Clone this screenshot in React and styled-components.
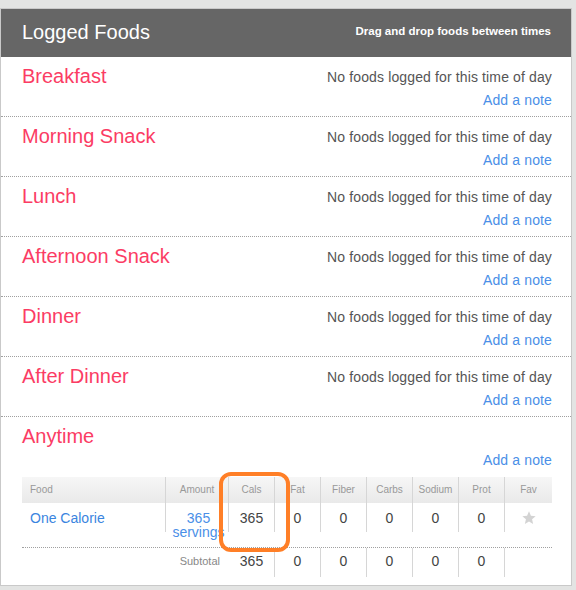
import React from 'react';
import styled, { createGlobalStyle } from 'styled-components';

const GlobalStyle = createGlobalStyle`
  html, body {
    margin: 0;
    padding: 0;
    background: #e3e4e3;
  }
  body {
    padding-top: 8px;
    font-family: "Liberation Sans", Arial, sans-serif;
  }
`;

const Card = styled.div`
  position: relative;
  width: 570px;
  background: #fff;
  border: 1px solid #c9c9c9;
  padding-bottom: 8px;
`;

const Header = styled.div`
  height: 48px;
  background: #666;
  display: flex;
  align-items: center;
  justify-content: space-between;
  padding: 0 20px 0 21px;
  color: #fff;
`;

const HeaderTitle = styled.div`
  font-size: 20px;
  margin-top: -2px;
`;

const HeaderHint = styled.div`
  font-size: 11.5px;
  font-weight: bold;
  margin-top: -4px;
`;

const Section = styled.div`
  border-bottom: ${({ last }) => (last ? 'none' : '1px dotted #a0a0a0')};
  padding: 0 19px 0 21px;
`;

const SectionHead = styled.div`
  height: 59px;
  display: flex;
  justify-content: space-between;
  box-sizing: border-box;
  padding-top: 7px;
`;

const MealName = styled.div`
  font-size: 20px;
  line-height: 24px;
  color: #fb3c64;
`;

const Notes = styled.div`
  text-align: right;
  font-size: 14px;
  line-height: 23px;
  padding-top: 2px;
  letter-spacing: 0.13px;
  color: #555;
`;

const NoteLink = styled.a`
  display: block;
  color: #4a8fe7;
  text-decoration: none;
  cursor: pointer;
`;

const Empty = styled.div`
  height: 23px;
`;

const Table = styled.div`
  margin-top: 1px;
  width: 530px;
`;

const cols = '144px 63px 46px 46px 46px 46px 46px 46px 47px';

const HeadRow = styled.div`
  display: grid;
  grid-template-columns: ${cols};
  height: 26px;
  background: linear-gradient(#f6f6f6, #e9e9e9);
`;

const HeadCell = styled.div`
  font-size: 10px;
  line-height: 26px;
  color: #999;
  text-align: ${({ align }) => align || 'center'};
  padding-left: ${({ align }) => (align === 'left' ? '8px' : '0')};
  border-right: ${({ edge }) => (edge ? 'none' : '1px solid #d6d6d6')};
  white-space: nowrap;
  overflow: hidden;
`;

const BodyRow = styled.div`
  display: grid;
  grid-template-columns: ${cols};
  padding-bottom: 15px;
  border-bottom: 1px dotted #a0a0a0;
`;

const Cell = styled.div`
  height: 29px;
  box-sizing: border-box;
  padding-top: 8px;
  font-size: 14px;
  line-height: 14px;
  color: #444;
  text-align: ${({ align }) => align || 'center'};
  padding-left: ${({ align }) => (align === 'left' ? '8px' : '0')};
  border-right: ${({ edge }) => (edge ? 'none' : '1px solid #d6d6d6')};
`;

const FoodLink = styled.a`
  color: #3a85e0;
  text-decoration: none;
`;

const AmountLink = styled.a`
  color: #4a8fe7;
  text-decoration: none;
  display: block;
  padding-left: 3px;
`;

const SubRow = styled.div`
  display: grid;
  grid-template-columns: 207px 46px 46px 46px 46px 46px 46px 47px;
`;

const SubCell = styled.div`
  height: 29px;
  line-height: 27px;
  font-size: 14px;
  color: #444;
  text-align: center;
  border-right: ${({ edge }) => (edge ? 'none' : '1px solid #d6d6d6')};
`;

const SubLabel = styled.div`
  font-size: 11px;
  line-height: 27px;
  color: #888;
  text-align: right;
  padding-right: 9px;
`;

const Highlight = styled.div`
  position: absolute;
  left: 218px;
  top: 463px;
  width: 63px;
  height: 72px;
  border: 4px solid #ff7f27;
  border-radius: 12px;
  pointer-events: none;
`;

const StarIcon = () => (
  <svg width="16" height="16" viewBox="0 0 24 24" style={{ marginTop: -1 }}>
    <polygon
      points="12,2 14.9,8.6 22,9.3 16.6,14 18.2,21 12,17.3 5.8,21 7.4,14 2,9.3 9.1,8.6"
      fill="#d3d3d3"
    />
  </svg>
);

const meals = ['Breakfast', 'Morning Snack', 'Lunch', 'Afternoon Snack', 'Dinner', 'After Dinner'];
const heads = ['Fat', 'Fiber', 'Carbs', 'Sodium', 'Prot'];

const App = () => (
  <>
    <GlobalStyle />
    <Card>
      <Header>
        <HeaderTitle>Logged Foods</HeaderTitle>
        <HeaderHint>Drag and drop foods between times</HeaderHint>
      </Header>
      {meals.map((meal) => (
        <Section key={meal}>
          <SectionHead>
            <MealName>{meal}</MealName>
            <Notes>
              No foods logged for this time of day
              <NoteLink>Add a note</NoteLink>
            </Notes>
          </SectionHead>
        </Section>
      ))}
      <Section last>
        <SectionHead>
          <MealName>Anytime</MealName>
          <Notes>
            <Empty />
            <NoteLink>Add a note</NoteLink>
          </Notes>
        </SectionHead>
        <Table>
          <HeadRow>
            <HeadCell align="left">Food</HeadCell>
            <HeadCell>Amount</HeadCell>
            <HeadCell>Cals</HeadCell>
            {heads.map((h) => (
              <HeadCell key={h}>{h}</HeadCell>
            ))}
            <HeadCell edge>Fav</HeadCell>
          </HeadRow>
          <BodyRow>
            <Cell align="left">
              <FoodLink>One Calorie</FoodLink>
            </Cell>
            <Cell>
              <AmountLink>365 servings</AmountLink>
            </Cell>
            <Cell>365</Cell>
            {heads.map((h) => (
              <Cell key={h}>0</Cell>
            ))}
            <Cell edge>
              <StarIcon />
            </Cell>
          </BodyRow>
          <SubRow>
            <SubLabel>Subtotal</SubLabel>
            <SubCell>365</SubCell>
            {heads.map((h) => (
              <SubCell key={h}>0</SubCell>
            ))}
            <SubCell edge />
          </SubRow>
        </Table>
      </Section>
      <Highlight />
    </Card>
  </>
);

export default App;
